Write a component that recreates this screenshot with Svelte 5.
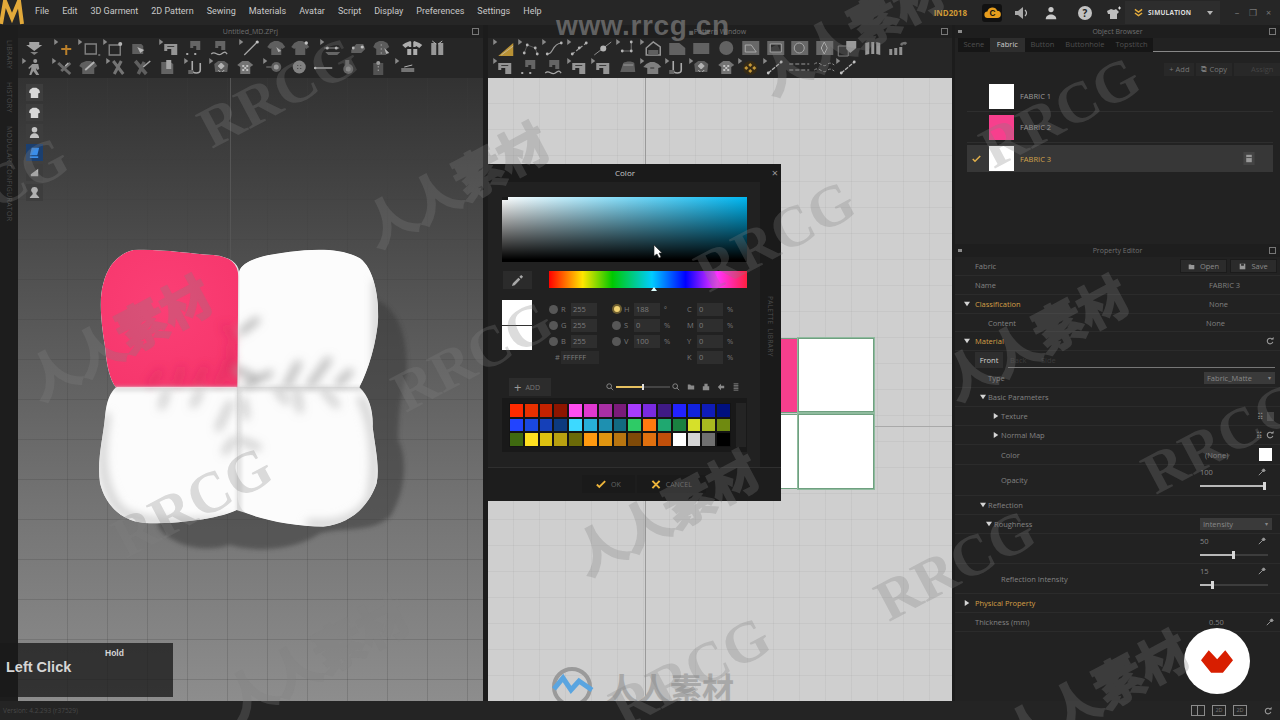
<script lang="ts">
  const menu = ['File', 'Edit', '3D Garment', '2D Pattern', 'Sewing', 'Materials', 'Avatar', 'Script', 'Display', 'Preferences', 'Settings', 'Help'];

  // toolbar icons, drawn on a 24x18 box; a name ending in ^ gets the little corner marker
  const icons: Record<string, string> = {
    down: '<path d="M7 3h10v3h3l-8 6-8-6h3z" fill="#c8c8c8"/><path d="M8 13h8l-4 3z" fill="#9a9a9a"/>',
    move: '<path d="M11 6h2v3h4v2h-4v5h-2v-5H7V9h4z" fill="#e59a2c"/>',
    rect: '<path d="M7 5h11v10H7z" fill="none" stroke="#9a9a9a" stroke-width="1.4"/><path d="M20 15h2v2h-2z" fill="#777"/>',
    rectp: '<path d="M6 6h11v10H6z" fill="none" stroke="#9a9a9a" stroke-width="1.4"/><circle cx="17" cy="5" r="2" fill="#ddd"/>',
    fold: '<path d="M5 5h9l2 2v8H5z" fill="#6e6e6e"/><path d="M10 8l7 3-4 3z" fill="#ddd"/>',
    mach: '<path d="M5 5h13v11h-6v-6H8v2H5z" fill="#b5b5b5"/><path d="M8 7h7v1H8z" fill="#444"/>',
    seam: '<path d="M7 2h10v9H13V7h-3v2H7z" fill="#777"/><path d="M3 15h16" stroke="#ccc" stroke-dasharray="2 6" stroke-width="2"/>',
    wave: '<path d="M7 2h10v9H13V7h-3v2H7z" fill="#777"/><path d="M3 15c4-4 6 3 10 0s4-2 6 0" fill="none" stroke="#ccc" stroke-width="1.3"/>',
    needle: '<path d="M5 16L17 4" stroke="#c9c9c9" stroke-width="1.3"/><circle cx="18" cy="3" r="1.6" fill="#eee"/>',
    shirtd: '<path d="M6 4l4-2h4l4 2 3 4-3 2-1-1v7H7V9l-1 1-3-2z" fill="#6f6f6f"/><path d="M12 8l5 4-3 1z" fill="#ddd"/>',
    shirtp: '<path d="M6 4l4-2h4l4 2 3 4-3 2-1-1v7H7V9l-1 1-3-2z" fill="#6f6f6f"/><circle cx="18" cy="4" r="1.7" fill="#eee"/>',
    pin: '<path d="M4 9h15" stroke="#aaa"/><circle cx="7" cy="9" r="1.5" fill="#ddd"/><circle cx="16" cy="9" r="1.5" fill="#ddd"/><path d="M5 13h15l-3 3H8z" fill="#777"/>',
    pin2: '<path d="M7 11l5-6h7l2 5-4 4H7z" fill="#707070"/><circle cx="18" cy="8" r="1.6" fill="#eee"/><circle cx="9" cy="9" r="1.4" fill="#ddd"/>',
    shirt3: '<path d="M6 4l4-2h4l4 2 2 4-3 2v6H7v-6L4 8z" fill="#6c6c6c"/><path d="M12 5v10" stroke="#aaa" stroke-dasharray="2 2"/><path d="M15 9l5 5-3 1z" fill="#ddd"/>',
    split: '<path d="M5 4l5-2 1 1v5H9L8 7 5 9 2 6zM19 4l-5-2-1 1v5h2l1-1 3 2 3-3z" fill="#d4d4d4"/><path d="M7 10h4v6H7zM13 10h4v6h-4z" fill="#d4d4d4"/>',
    gift: '<path d="M6 4h5v12H6zM13 4h5v12h-5z" fill="#b8b8b8"/><path d="M11 5l-4-3M13 5l4-3" stroke="#ddd"/>',
    walk: '<circle cx="13" cy="3" r="2" fill="#bbb"/><path d="M10 6h6l1 5-2 1-1-2v2l3 5h-3l-3-4-2 4H7l2-6V9L7 11 6 10z" fill="#b5b5b5"/>',
    cut: '<path d="M6 5l12 11M18 5L9 13" stroke="#7d7d7d" stroke-width="3"/><path d="M13 8l3-3" stroke="#ddd" stroke-width="1.2"/>',
    shirtx: '<path d="M5 5l5-2h4l5 2 2 3-3 2v6H6v-6L3 8z" fill="#707070"/><path d="M9 12l9-8" stroke="#ddd" stroke-width="1.8"/>',
    xcut: '<path d="M7 3l10 13M15 3L8 16" stroke="#8b8b8b" stroke-width="3"/>',
    xknife: '<path d="M5 3l11 13M14 4L8 16" stroke="#6f6f6f" stroke-width="3.5"/><path d="M13 9l7-6" stroke="#ccc" stroke-width="1.5"/>',
    book: '<path d="M6 4h9l3 2v10H6z" fill="#757575"/><path d="M11 2h5v9h-5z" fill="#c9c9c9"/>',
    tape: '<path d="M8 3v9c0 4 8 4 8 0V5" fill="none" stroke="#cfcfcf" stroke-width="1.6"/><path d="M4 12h5v4H4z" fill="#777"/>',
    check: '<path d="M5 6l4-3h6l4 3-1 8H6z" fill="#707070"/><path d="M9 8l3 3 3-3-3-3zM9 12l2 2M15 12l-2 2" fill="#ddd" stroke="#ddd"/>',
    check2: '<path d="M4 7l5-4h6l5 4-3 2v7H7V9z" fill="#8a8a8a"/><path d="M9 7h2v2H9zM13 7h2v2h-2zM11 9h2v2h-2zM9 11h2v2H9zM13 11h2v2h-2z" fill="#eee"/>',
    btn: '<path d="M3 9h6" stroke="#999"/><circle cx="13" cy="9" r="5" fill="#6f6f6f"/><circle cx="13" cy="9" r="2.5" fill="#bbb"/>',
    btn2: '<circle cx="12" cy="9" r="6.5" fill="#9c9c9c"/><path d="M10 7h1v1h-1zM13 7h1v1h-1zM10 10h1v1h-1zM13 10h1v1h-1z" fill="#444"/>',
    line: '<path d="M2 10h18" stroke="#bbb" stroke-width="1.6"/><circle cx="3" cy="10" r="1.2" fill="#eee"/>',
    hole: '<path d="M9 2h4v5H9z" fill="#777"/><circle cx="12" cy="11" r="5" fill="#777"/><circle cx="12" cy="11" r="2.5" fill="#aaa"/>',
    jacket: '<path d="M7 5h10v12H7z" fill="#5f5f5f"/><circle cx="12" cy="5" r="2" fill="#bbb"/><path d="M12 8v7" stroke="#ccc" stroke-dasharray="1.5 2"/>',
    iron2: '<path d="M6 10h13v4H6z" fill="#8a8a8a"/><path d="M9 9l8-2" stroke="#ddd"/>',
    tri: '<path d="M20 4v13H5z" fill="#e3b13a"/><path d="M8 16l12-9" stroke="#fff" stroke-width=".6"/>',
    poly: '<path d="M6 14l3-8 8 3 2 6" fill="none" stroke="#666"/><g fill="#ddd"><circle cx="6" cy="14" r="1.4"/><circle cx="9" cy="6" r="1.4"/><circle cx="17" cy="9" r="1.4"/><circle cx="19" cy="15" r="1.4"/></g>',
    curve: '<path d="M5 15c7 0 4-10 14-11" fill="none" stroke="#bbb" stroke-width="1.2"/><circle cx="5" cy="15" r="1.4" fill="#ddd"/><circle cx="19" cy="4" r="1.4" fill="#ddd"/>',
    curve2: '<path d="M5 15l14-11" stroke="#bbb" stroke-dasharray="3 2" stroke-width="1.2"/><circle cx="5" cy="15" r="1.4" fill="#ddd"/><circle cx="12" cy="9" r="1.4" fill="#ddd"/><circle cx="19" cy="4" r="1.4" fill="#ddd"/>',
    circ: '<path d="M3 16L20 3" stroke="#aaa"/><circle cx="12" cy="9.500" r="3" fill="#ddd"/>',
    corner: '<path d="M15 3v9H6" fill="none" stroke="#888"/><g fill="#ddd"><circle cx="15" cy="3" r="1.4"/><circle cx="15" cy="12" r="1.4"/><circle cx="6" cy="12" r="1.4"/></g>',
    house: '<path d="M6 9l7-6 7 5v8H6z" fill="none" stroke="#b5b5b5" stroke-width="1.5"/><path d="M8 11h10v5H8z" fill="#6f6f6f"/>',
    folder: '<path d="M4 4h10l6 5v7H4z" fill="#747474"/>',
    frect: '<path d="M4 4h16v11H4z" fill="#747474"/>',
    fcirc: '<circle cx="12" cy="9" r="7" fill="#747474"/>',
    note: '<path d="M4 2h17v14H4z" fill="#7b7b7b"/><path d="M7 6h6l5 7H7z" fill="none" stroke="#cfcfcf"/>',
    orect: '<path d="M4 2h17v14H4z" fill="#7b7b7b"/><path d="M7 5h11v8H7z" fill="#2e2e2e" stroke="#ccc"/>',
    ocirc: '<path d="M4 2h17v14H4z" fill="#7b7b7b"/><circle cx="12" cy="9" r="5" fill="#6c6c6c" stroke="#ccc"/>',
    odia: '<path d="M4 2h17v14H4z" fill="#7b7b7b"/><path d="M12 3l3 6-3 6-3-6z" fill="#6c6c6c" stroke="#ddd"/>',
    shape: '<path d="M2 7h10v10H2z" fill="none" stroke="#999"/><path d="M10 2h10v7l-6 5-4-4z" fill="#bbb"/>',
    bars: '<path d="M4 4l4-1v12l-4 1zM10 3h3v12h-3zM15 3l4 1v12l-4-1z" fill="#b8b8b8"/>',
    bararr: '<path d="M4 10h3v6H4zM9 9h3v7H9zM14 8h3v8h-3z" fill="#b0b0b0"/><path d="M15 6c0-3 3-3 5-3l-1-1 3 2-3 3 1-1c-2-1-3 0-3 1z" fill="#888"/>',
    iron: '<path d="M4 14l3-9c3-2 9-2 11 0l1 9z" fill="#6f6f6f"/><path d="M7 7h10" stroke="#bbb"/>',
    shirts: '<path d="M6 6l4-2h4l4 2 3 3-3 1v6H7v-6L3 9z" fill="#999"/><path d="M10 10h4" stroke="#333"/>',
    sorange: '<circle cx="12" cy="10" r="7" fill="#3a2c12"/><path d="M12 5l2 2-2 2-2-2zM12 11l2 2-2 2-2-2zM8 8l2 2-2 2-2-2zM16 8l2 2-2 2-2-2z" fill="#f0b73d"/>',
    ln: '<path d="M5 15L18 4" stroke="#ddd" stroke-width="1.3" stroke-dasharray="4 1"/><circle cx="5" cy="15" r="1.4" fill="#eee"/><circle cx="18" cy="4" r="1.4" fill="#eee"/>',
    dash: '<path d="M2 6h20M2 12h20" stroke="#bbb" stroke-dasharray="4 2" stroke-width="1.2"/>',
    wv: '<path d="M2 6c5-4 8 4 12 1s5-2 8 0M2 12c5-4 8 4 12 1s5-2 8 0" fill="none" stroke="#aaa" stroke-dasharray="3 2"/>'
  };

  const bar3d = [
    [['down'], ['move^', 'rect^', 'rectp^', 'fold'], ['mach^', 'seam', 'wave'], ['needle^', 'shirtd', 'shirtp'], ['pin^', 'pin2', 'shirt3'], ['split', 'gift']],
    [['walk^'], ['cut^', 'shirtx'], ['xcut^', 'xknife', 'book'], ['tape^', 'check^', 'check2'], ['btn^', 'btn2', 'line', 'hole'], ['jacket'], ['iron2^']]
  ];
  const barPattern = [
    ['tri^', 'poly^', 'curve^', 'curve2^', 'circ', 'corner^', 'house^', 'folder', 'frect', 'fcirc', 'note', 'orect', 'ocirc', 'odia', 'shape', 'bars', 'bararr'],
    ['mach^', 'seam', 'wave', 'mach^', 'mach^', 'iron', 'shirts^', 'tape^', 'check^', 'check2', 'sorange^', 'ln^', 'dash', 'wv', 'ln^']
  ];
  const shirtPath = 'M2 4l3-2h4l3 2 1 3-2 1v5H3V8L1 7z';
  const sideTools = [
    { d: shirtPath, c: '#d8d8d8' },
    { d: shirtPath, c: '#d8d8d8' },
    { d: 'M7 1a3 3 0 0 1 0 6a3 3 0 0 1 0-6M2 13c0-7 10-7 10 0z', c: '#c4c4c4' },
    { d: 'M4 2h8l-2 8H2zM2 11h9v2H2z', c: '#3b8eea', active: true },
    { d: 'M3 9l8-6v8H3z', c: '#b5b5b5' },
    { d: 'M7 1a3.500 3.500 0 0 1 2 6.500v1.500l3 3v1H2v-1l3-3V7.500A3.500 3.500 0 0 1 7 1z', c: '#b0b0b0' }
  ];

  const palette = [
    ['#ff2a00', '#e83000', '#c42200', '#8c1500', '#ff4df0', '#e038d0', '#a92fa5', '#7a1b7a', '#a83cff', '#7a2ae0', '#3f1a85', '#2222ff', '#1122dd', '#0f1cb8', '#00107f'],
    ['#2244ff', '#1a48e0', '#1540b8', '#0c3a7f', '#3dd9ff', '#28b0d8', '#1e90b0', '#126a80', '#2ecb66', '#ff7a10', '#1fa870', '#1a8040', '#d6e02a', '#a8b820', '#6f8a10'],
    ['#3f6a10', '#ffe020', '#dcc010', '#b8a010', '#6b6a08', '#ff9a10', '#e09510', '#b87510', '#7f4a08', '#e0700f', '#c04f0a', '#ffffff', '#d5d5d5', '#707070', '#000000']
  ];

  const tabs = ['Scene', 'Fabric', 'Button', 'Buttonhole', 'Topstitch'];
  const fabrics = [
    { name: 'FABRIC 1', color: '#ffffff', on: false },
    { name: 'FABRIC 2', color: '#f73f8d', on: false },
    { name: 'FABRIC 3', color: '#ffffff', on: true }
  ];

  // diagonal watermarks: x, y of the centre
  const marks = [
    { t: 'RRCG', x: 278, y: 92 }, { t: 'RRCG', x: -12, y: 192 }, { t: 'RRCG', x: 775, y: 236 },
    { t: 'RRCG', x: 472, y: 356 }, { t: 'RRCG', x: 1060, y: 112 }, { t: 'RRCG', x: 1222, y: 438 },
    { t: 'RRCG', x: 192, y: 502 }, { t: 'RRCG', x: 955, y: 565 }, { t: 'RRCG', x: 690, y: 672 },
    { t: '人人素材', x: 118, y: 335 }, { t: '人人素材', x: 455, y: 182 }, { t: '人人素材', x: 850, y: 30 },
    { t: '人人素材', x: 1035, y: 335 }, { t: '人人素材', x: 665, y: 510 }, { t: '人人素材', x: 315, y: 655 },
    { t: '人人素材', x: 1095, y: 690 }
  ];
</script>

{#snippet tool(name)}
  <svg class="tool" viewBox="0 0 24 18" aria-hidden="true">
    {#if name.endsWith('^')}<path d="M0 0v6l4-3z" fill="#a5a5a5" />{/if}
    {@html icons[name.replace('^', '')]}
  </svg>
{/snippet}

{#snippet wrench()}
  <svg class="wrench" viewBox="0 0 10 10"><path d="M1 9l5-5M5 3l2-2 2 2-2 2z" stroke="#9b9b9b" stroke-width="1.2" fill="#9b9b9b" /></svg>
{/snippet}

{#snippet refresh()}
  <svg class="wrench" viewBox="0 0 10 10"><path d="M8 3a3.500 3.500 0 1 0 .5 3" fill="none" stroke="#9b9b9b" stroke-width="1.4" /><path d="M6 3h3.500V0z" fill="#9b9b9b" /></svg>
{/snippet}

{#snippet tri(down)}
  <svg class="tri" viewBox="0 0 8 8"><path d={down ? 'M0 1h8L4 7z' : 'M1 0v8l6-4z'} fill="#d5d5d5" /></svg>
{/snippet}

{#snippet slider(pct, width)}
  <div class="slider" style="width:{width}px">
    <div class="fill" style="width:{pct}%"></div>
    <div class="thumb" style="left:{pct}%"></div>
  </div>
{/snippet}

<div class="app">
  <header class="menubar">
    <svg class="logo" viewBox="0 0 24 25"><path d="M1 24L5 1l7 17 7-17 3 23" fill="none" stroke="#e2a93a" stroke-width="4" /></svg>
    <nav class="menu">
      {#each menu as m}<span>{m}</span>{/each}
    </nav>
    <div class="top-right">
      <span class="license">IND2018</span>
      <span class="cloud">
        <svg viewBox="0 0 18 14"><path d="M4 13a3.500 3.500 0 0 1-.5-7 5.500 5.500 0 0 1 10.500-1 4 4 0 0 1 0 8z" fill="#e69d1d" /><text x="9" y="11" text-anchor="middle" class="cloud-c">C</text></svg>
      </span>
      <svg class="ic speaker" viewBox="0 0 16 14"><path d="M1 5h3l5-4v12l-5-4H1z" fill="#a8a8a8" /><path d="M11 4c2 2 2 4 0 6" fill="none" stroke="#bbb" stroke-width="1.200" /></svg>
      <svg class="ic person" viewBox="0 0 14 16"><circle cx="7" cy="4" r="3" fill="#c8c8c8" /><path d="M1 15c0-7 12-7 12 0z" fill="#c8c8c8" /></svg>
      <span class="help">?</span>
      <svg class="ic shirtplus" viewBox="0 0 16 14"><path d="M1 5l4-2 3 1 2-1 3 3-2 2v5H4V8L2 8z" fill="#bdbdbd" /><path d="M12 2h3M13.500 .5v3" stroke="#ddd" /></svg>
      <div class="simulation">
        <svg viewBox="0 0 10 10" class="chev"><path d="M1 1l4 3 4-3M1 5l4 3 4-3" fill="none" stroke="#e6ad3d" stroke-width="1.600" /></svg>
        <span>SIMULATION</span>
        <svg viewBox="0 0 8 8" class="dd"><path d="M1 2h6L4 6z" fill="#b5b5b5" /></svg>
      </div>
      <div class="winctl"><span>–</span><span>❐</span><span>×</span></div>
    </div>
  </header>

  <main class="main">
    <aside class="rail">
      <span>LIBRARY</span>
      <span>HISTORY</span>
      <span>MODULAR CONFIGURATOR</span>
    </aside>

    <section class="win win3d">
      <div class="wintitle">Untitled_MD.ZPrj<i class="pop"></i></div>
      <div class="toolbar">
        {#each bar3d as row, r}
          <div class="toolrow" class:second={r === 1}>
            {#each row as group}
              <div class="group">{#each group as name}{@render tool(name)}{/each}</div>
            {/each}
          </div>
        {/each}
      </div>
      <div class="viewport">
        <div class="sidetools">
          {#each sideTools as s}
            <span class="sidetool" class:active={s.active}>
              <svg viewBox="0 0 14 14"><path d={s.d} fill={s.c} /></svg>
            </span>
          {/each}
        </div>
        <i class="axis"></i>
        <svg class="pillows" viewBox="0 0 990 960" aria-hidden="true">
          <defs>
            <filter id="soft" x="-20%" y="-20%" width="140%" height="140%"><feGaussianBlur stdDeviation="6" /></filter>
            <filter id="softer" x="-20%" y="-20%" width="140%" height="140%"><feGaussianBlur stdDeviation="14" /></filter>
            <radialGradient id="pinkg" cx="45%" cy="40%" r="70%"><stop offset="0" stop-color="#fb3f75" /><stop offset="1" stop-color="#f6366c" /></radialGradient>
            <clipPath id="all"><path d="M130 30C200 25 300 40 370 45C420 50 445 70 447 95C460 60 520 45 600 35C680 25 760 25 810 55C850 85 865 160 865 230C860 310 835 390 808 442C840 470 850 520 848 560C855 620 870 680 860 730C840 790 790 850 700 860C620 860 520 840 470 820L440 810C400 830 300 850 180 850C110 850 50 810 30 730C20 660 40 590 45 530C50 480 60 460 78 442C60 420 50 380 45 320C35 260 25 180 40 130C55 70 90 40 130 30Z" /></clipPath>
          </defs>
          <path d="M860 180C930 210 955 300 950 400C930 470 925 540 925 600C955 660 945 760 900 830C840 880 760 860 690 880C620 930 500 940 420 915C340 940 260 920 210 870L180 800L700 400Z" fill="#383838" opacity=".52" filter="url(#soft)" />
          <g clip-path="url(#all)">
            <rect width="990" height="960" fill="#e4e4e4" />
            <path d="M130 30C200 25 300 40 370 45C420 50 445 70 445 110L442 442L78 442C60 420 50 380 45 320C35 260 25 180 40 130C55 70 90 40 130 30Z" fill="url(#pinkg)" />
            <path d="M448 90C460 60 520 45 600 35C680 25 760 25 810 55C850 85 865 160 865 230C860 310 835 390 808 442L448 442Z" fill="#fcfcfc" />
            <path d="M78 444C200 445 330 445 441 445L441 810C400 830 300 850 180 850C110 850 50 810 30 730C20 660 40 590 45 530C50 480 60 460 78 444Z" fill="#fcfcfc" />
            <path d="M445 445L808 445C840 470 850 520 848 560C855 620 870 680 860 730C840 790 790 850 700 860C620 860 520 840 470 820C445 805 443 780 443 760Z" fill="#fcfcfc" />
            <path d="M860 120V420M810 470C860 560 860 700 840 780C800 840 740 860 650 850M430 840C300 850 160 860 90 810C30 740 30 640 50 520" fill="none" stroke="#c8c8c8" stroke-width="20" filter="url(#softer)" />
            <g filter="url(#softer)" fill="none" stroke-linecap="round">
              <g stroke="#c92557" stroke-width="14" opacity=".5">
                <path d="M180 435L210 395M260 435L275 385M320 430L345 385M385 430L415 365M435 420L420 320M435 300L405 260" />
              </g>
              <g stroke="#a2a2a2" stroke-width="16">
                <path d="M470 435L540 400M590 435L625 370M660 435L715 360M745 430L780 395M455 275L500 240M445 390L490 410" />
                <path d="M230 455L215 500M330 455L310 495M420 490L385 565M430 600L405 635" opacity=".7" />
                <path d="M560 450L590 485M620 450L630 510M700 450L740 495M460 480L468 530M450 600L505 622" opacity=".7" />
              </g>
            </g>
            <path d="M447 440V820M450 446H820M70 446H440" stroke="#c8c8c8" stroke-width="8" filter="url(#soft)" />
            <path d="M446 95V440" stroke="#f2e3e7" stroke-width="2" />
            <path d="M80 442H440" stroke="#ffe3ec" stroke-width="2.500" />
          </g>
        </svg>
      </div>
    </section>

    <section class="win winpat">
      <div class="wintitle">Pattern Window<i class="pop"></i></div>
      <div class="toolbar pat">
        {#each barPattern as row}
          <div class="toolrow">{#each row as name}{@render tool(name)}{/each}</div>
        {/each}
      </div>
      <div class="canvas">
        <i class="vline"></i>
        <i class="hline"></i>
        <div class="piece p1"></div>
        <div class="piece p2"></div>
        <div class="piece p3"></div>
        <div class="piece p4"></div>

        <div class="brand">
          <svg viewBox="0 0 44 44"><circle cx="22" cy="22" r="18" fill="none" stroke="#9a9a9a" stroke-width="4" /><path d="M4 24l9-11 8 12 8-9 13 9" fill="none" stroke="#5aa5e0" stroke-width="5" /></svg>
          <span>人人素材</span>
        </div>

        <div class="dialog">
          <div class="dlg-title">Color<span class="dlg-x">×</span></div>
          <div class="dlg-body">
            <div class="dlg-main">
              <div class="sv">
                <i class="sv-mark"></i>
                <svg class="cursor" viewBox="0 0 10 14"><path d="M1 0v11l3-2 2 4 2-1-2-4h3z" fill="#fff" stroke="#222" stroke-width=".6" /></svg>
              </div>
              <div class="hue-row">
                <span class="dropper">
                  <svg viewBox="0 0 14 14"><path d="M1 13l1-3 6-6 2 2-6 6zM9 3l2-2 2 2-2 2z" fill="#a8a8a8" /></svg>
                </span>
                <div class="hue"><i class="hue-mark"></i></div>
              </div>
              <div class="values">
                <div class="compare"><i></i><i></i></div>
                <div class="fields">
                  <div class="field"><i class="radio"></i><b>R</b><span class="box">255</span></div>
                  <div class="field"><i class="radio on"></i><b>H</b><span class="box">188</span><em>º</em></div>
                  <div class="field cm"><b>C</b><span class="box">0</span><em>%</em></div>
                  <div class="field"><i class="radio"></i><b>G</b><span class="box">255</span></div>
                  <div class="field"><i class="radio"></i><b>S</b><span class="box">0</span><em>%</em></div>
                  <div class="field cm"><b>M</b><span class="box">0</span><em>%</em></div>
                  <div class="field"><i class="radio"></i><b>B</b><span class="box">255</span></div>
                  <div class="field"><i class="radio"></i><b>V</b><span class="box">100</span><em>%</em></div>
                  <div class="field cm"><b>Y</b><span class="box">0</span><em>%</em></div>
                  <div class="field hex"><b>#</b><span class="box wide">FFFFFF</span></div>
                  <div class="field"></div>
                  <div class="field cm"><b>K</b><span class="box">0</span><em>%</em></div>
                </div>
              </div>
              <div class="pal-head">
                <span class="add"><b>+</b>ADD</span>
                <div class="pal-tools">
                  <svg class="zoomi" viewBox="0 0 10 10"><circle cx="4" cy="4" r="3" fill="none" stroke="#999" /><path d="M6 6l3 3" stroke="#999" /></svg>
                  <div class="zslider"><i></i><u></u></div>
                  <svg class="zoomi" viewBox="0 0 10 10"><circle cx="4" cy="4" r="3" fill="none" stroke="#999" /><path d="M6 6l3 3" stroke="#999" /></svg>
                  <svg class="zoomi gap" viewBox="0 0 10 10"><path d="M1 2h3l1 1h4v5H1z" fill="#8a8a8a" /></svg>
                  <svg class="zoomi gap" viewBox="0 0 10 10"><path d="M1 4h8v5H1zM3 1h4v3H3z" fill="#8a8a8a" /></svg>
                  <svg class="zoomi gap" viewBox="0 0 10 10"><path d="M1 5l4-4v2.500h4v3H5V9z" fill="#8a8a8a" /></svg>
                  <svg class="zoomi gap" viewBox="0 0 10 10"><path d="M2 1h6M2 3h6M2 5h6M2 7h6M2 9h6" stroke="#8a8a8a" /></svg>
                </div>
              </div>
              <div class="palette">
                <div class="swatches">
                  {#each palette as row}
                    {#each row as c}<i style="background:{c}"></i>{/each}
                  {/each}
                </div>
                <div class="pal-scroll"></div>
              </div>
            </div>
            <div class="strip"><span>PALETTE  LIBRARY</span></div>
          </div>
          <div class="dlg-foot">
            <span class="dbtn"><svg viewBox="0 0 12 10"><path d="M1 5l3 3 7-7" fill="none" stroke="#edb43a" stroke-width="2.200" /></svg>OK</span>
            <span class="dbtn"><svg viewBox="0 0 10 10"><path d="M1 1l8 8M9 1L1 9" stroke="#edb43a" stroke-width="2.200" /></svg>CANCEL</span>
          </div>
        </div>
      </div>
    </section>

    <aside class="side">
      <div class="objbrowser">
        <div class="wintitle small"><i class="dot"></i>Object Browser<i class="pop"></i></div>
        <div class="tabs">
          {#each tabs as t}<span class:active={t === 'Fabric'}>{t}</span>{/each}
        </div>
        <div class="actions">
          <span>+ Add</span><span>⧉ Copy</span><span class="dim">Assign</span>
        </div>
        <div class="fabrics">
          {#each fabrics as f}
            <div class="fabric" class:on={f.on}>
              <span class="tick">{#if f.on}<svg viewBox="0 0 12 10"><path d="M1 5l3 3 7-7" fill="none" stroke="#e2b04a" stroke-width="2" /></svg>{/if}</span>
              <i class="fswatch" style="background:{f.color}"></i>
              <span class="fname">{f.name}</span>
              {#if f.on}<svg class="trash" viewBox="0 0 12 14"><rect width="12" height="14" fill="#444" /><path d="M3 3h6v8H3z" fill="#999" /><path d="M3 6h6" stroke="#444" /></svg>{/if}
            </div>
          {/each}
        </div>
      </div>

      <div class="propeditor">
        <div class="wintitle small"><i class="dot"></i>Property Editor<i class="pop"></i></div>
        <div class="row">
          <span class="lab l0 auto">Fabric</span>
          <div class="pbtns">
            <span class="pbtn"><svg viewBox="0 0 10 10"><path d="M1 2h3l1 1h4v6H1z" fill="#999" /></svg>Open</span>
            <span class="pbtn"><svg viewBox="0 0 10 10"><path d="M1 1h8v8H1z" fill="#999" /><path d="M3 1h4v3H3z" fill="#333" /></svg>Save</span>
          </div>
        </div>
        <div class="row"><span class="lab l0">Name</span><span class="val">FABRIC 3</span></div>
        <div class="row"><span class="lab l0 gold">{@render tri(true)}Classification</span><span class="val">None</span></div>
        <div class="row t18"><span class="lab l1">Content</span><span class="val v2">None</span></div>
        <div class="row"><span class="lab l0 gold">{@render tri(true)}Material</span><span class="end">{@render refresh()}</span></div>
        <div class="row front">
          <span class="fronttab">Front</span><span class="ghost">Back</span><span class="ghost">Side</span>
        </div>
        <div class="row"><span class="lab l1">Type</span><span class="select"><span>Fabric_Matte</span><b>▾</b></span></div>
        <div class="row"><span class="lab l1">{@render tri(true)}Basic Parameters</span></div>
        <div class="row"><span class="lab l2">{@render tri(false)}Texture</span><span class="end">⠿ <u class="mini"></u></span></div>
        <div class="row"><span class="lab l2">{@render tri(false)}Normal Map</span><span class="end">⠿ {@render refresh()}</span></div>
        <div class="row t20"><span class="lab l2">Color</span><span class="val v3">(None)</span><i class="colorbox"></i></div>
        <div class="row tall">
          <span class="lab l2">Opacity</span>
          <div class="num"><div class="numtop"><span>100</span>{@render wrench()}</div>{@render slider(98, 65)}</div>
        </div>
        <div class="row"><span class="lab l1">{@render tri(true)}Reflection</span></div>
        <div class="row"><span class="lab l15">{@render tri(true)}Roughness</span><span class="select wide"><span>Intensity</span><b>▾</b></span></div>
        <div class="row tall2">
          <span class="lab l2"></span>
          <div class="num"><div class="numtop"><span>50</span>{@render wrench()}</div>{@render slider(49, 68)}</div>
        </div>
        <div class="row tall2">
          <span class="lab l2">Reflection Intensity</span>
          <div class="num"><div class="numtop"><span>15</span>{@render wrench()}</div>{@render slider(18, 68)}</div>
        </div>
        <div class="row"><span class="lab l0 gold">{@render tri(false)}Physical Property</span></div>
        <div class="row"><span class="lab l0">Thickness (mm)</span><span class="val">0.50</span><span class="end">{@render wrench()}</span></div>
      </div>
    </aside>
  </main>

  <footer class="status">
    <span class="version">Version: 4.2.293 (r37529)</span>
    <div class="views">
      <i class="view split"></i><i class="view">2D</i><i class="view">2D</i>
      <span class="sep"></span>{@render refresh()}
    </div>
  </footer>

  <!-- floating layers over the whole app -->
  <div class="hold">
    <span class="hold-top">Hold</span>
    <span class="hold-main">Left Click</span>
  </div>
  <div class="badge">
    <svg viewBox="0 0 95 67"><path d="M23 0L48 27 72 0 95 30 65 67H30L0 30z" fill="#d81e00" /></svg>
  </div>
  <div class="url">www.rrcg.cn</div>
  <div class="marks">
    {#each marks as m}
      <span class={m.t === 'RRCG' ? 'mark latin' : 'mark cjk'} style="left:{m.x}px;top:{m.y}px">{m.t}</span>
    {/each}
  </div>
</div>

<style>
  :global(body) {
    margin: 0;
    background: #1c1c1c;
  }
  .app {
    position: relative;
    width: 1280px;
    height: 720px;
    overflow: hidden;
    display: flex;
    flex-direction: column;
    background: #1c1c1c;
    color: #9a9a9a;
    font-family: "Open Sans", "Liberation Sans", sans-serif;
    font-size: 8px;
    filter: blur(.35px);
  }
  i { display: block; font-style: normal; }

  /* top menu */
  .menubar {
    height: 25px;
    display: flex;
    align-items: center;
    background: #262626;
    flex-shrink: 0;
  }
  .logo { width: 24px; height: 25px; flex-shrink: 0; }
  .menu {
    display: flex;
    gap: 13px;
    margin-left: 11px;
    margin-bottom: 4px;
    font-family: Roboto, sans-serif;
    font-size: 9px;
    color: #c8c8c8;
    white-space: nowrap;
  }
  .top-right {
    margin-left: auto;
    display: flex;
    align-items: center;
    height: 25px;
  }
  .license { color: #d29a35; font-weight: 700; font-size: 8px; margin-right: 15px; }
  .cloud {
    width: 20px;
    height: 18px;
    background: #111;
    border-radius: 3px;
    display: flex;
    align-items: center;
    justify-content: center;
    margin-right: 12px;
  }
  .cloud svg { width: 17px; height: 13px; }
  .cloud-c { font: 700 9px "Liberation Sans", sans-serif; fill: #111; }
  .ic { height: 14px; }
  .speaker { width: 16px; margin-right: 14px; }
  .person { width: 14px; margin-right: 20px; }
  .help {
    width: 14px;
    height: 14px;
    border-radius: 50%;
    background: #c2c2c2;
    color: #222;
    font-size: 10px;
    font-weight: 700;
    line-height: 14px;
    text-align: center;
    margin-right: 14px;
  }
  .shirtplus { width: 16px; margin-right: 3px; }
  .simulation {
    width: 95px;
    height: 23px;
    background: #2d2d2d;
    display: flex;
    align-items: center;
    padding-left: 9px;
    box-sizing: border-box;
    color: #dcdcdc;
    font-weight: 700;
    font-size: 6.500px;
    letter-spacing: .2px;
  }
  .chev { width: 9px; height: 10px; margin-right: 5px; }
  .dd { width: 8px; height: 8px; margin-left: 15px; }
  .winctl {
    width: 60px;
    display: flex;
    justify-content: space-around;
    padding: 0 4px 0 10px;
    box-sizing: border-box;
    color: #777;
    font-size: 9px;
  }

  /* main columns */
  .main {
    flex: 1;
    min-height: 0;
    display: flex;
  }
  .rail {
    width: 18px;
    background: #1d1d1d;
    writing-mode: vertical-rl;
    display: flex;
    gap: 13px;
    align-items: center;
    padding-top: 15px;
    box-sizing: border-box;
    font-size: 7px;
    color: #4c4c4c;
    letter-spacing: .3px;
    flex-shrink: 0;
  }
  .win { display: flex; flex-direction: column; min-width: 0; }
  .win3d { width: 465px; margin-right: 5px; }
  .winpat { width: 464px; margin-right: 3px; }
  .wintitle {
    height: 13px;
    background: #1f1f1f;
    text-align: center;
    font-size: 7px;
    line-height: 13px;
    color: #6f6f6f;
    position: relative;
    flex-shrink: 0;
  }
  .pop {
    position: absolute;
    right: 4px;
    top: 3px;
    width: 5px;
    height: 5px;
    border: 1px solid #777;
  }
  .toolbar {
    height: 40px;
    box-sizing: border-box;
    padding-bottom: 2px;
    background: #262626;
    display: flex;
    flex-direction: column;
    flex-shrink: 0;
  }
  .toolrow {
    height: 19px;
    display: flex;
    align-items: center;
    padding-left: 4px;
    gap: 7px;
  }
  .toolrow.second { gap: 5px; }
  .group { display: flex; }
  .tool { width: 24.500px; height: 18px; flex-shrink: 0; opacity: .78; }
  .pat .toolrow { gap: 0; padding-left: 5px; }

  /* 3D view */
  .viewport {
    flex: 1;
    position: relative;
    overflow: hidden;
    background:
      repeating-linear-gradient(90deg, transparent 0 39px, rgba(60, 60, 60, .22) 39px 40px) 10px 0,
      repeating-linear-gradient(0deg, transparent 0 39px, rgba(60, 60, 60, .22) 39px 40px) 0 18px,
      linear-gradient(180deg, #323232 0, #4f4f4f 30%, #757575 70%, #8d8d8d 100%);
  }
  .axis {
    position: absolute;
    left: 212px;
    top: 0;
    height: 190px;
    width: 1px;
    background: #555;
  }
  .sidetools {
    position: absolute;
    left: 8px;
    top: 6px;
    display: flex;
    flex-direction: column;
    gap: 3px;
  }
  .sidetool {
    width: 17px;
    height: 17px;
    background: #3d3d3d;
    display: flex;
    align-items: center;
    justify-content: center;
  }
  .sidetool svg { width: 13px; height: 13px; }
  .sidetool.active { background: #1b3f6f; }
  .pillows {
    position: absolute;
    left: 72px;
    top: 162px;
    width: 330px;
    height: 320px;
  }
  .hold {
    position: absolute;
    left: 0;
    top: 643px;
    width: 173px;
    height: 54px;
    background: rgba(26, 26, 26, .78);
    font-family: "Liberation Sans", sans-serif;
    color: #d6d6d6;
    font-weight: 700;
  }
  .hold-top { position: absolute; left: 105px; top: 5px; font-size: 8.500px; }
  .hold-main { position: absolute; left: 6px; top: 16px; font-size: 14.500px; }

  /* pattern view */
  .canvas {
    flex: 1;
    position: relative;
    overflow: hidden;
    background:
      repeating-linear-gradient(90deg, transparent 0 25px, rgba(120, 120, 120, .09) 25px 26px),
      repeating-linear-gradient(0deg, transparent 0 25px, rgba(120, 120, 120, .09) 25px 26px),
      #cfcfcf;
  }
  .vline { position: absolute; left: 157px; top: 0; bottom: 0; width: 1px; background: #9a9a9a; }
  .hline { position: absolute; left: 0; right: 0; top: 348px; height: 1px; background: #a9a9a9; }
  .piece {
    position: absolute;
    background: #fff;
    border: 1px solid #6fa080;
    box-sizing: border-box;
  }
  .p1 { left: 280px; top: 260px; width: 30px; height: 75px; background: #f73f8d; }
  .p2 { left: 310px; top: 260px; width: 76px; height: 74px; }
  .p3 { left: 280px; top: 336px; width: 30px; height: 75px; border-left: 0; }
  .p4 { left: 310px; top: 336px; width: 76px; height: 75px; }
  .p2, .p4 { box-shadow: 0 0 0 1px #8fbb9e; }

  .brand {
    position: absolute;
    left: 62px;
    top: 586px;
    display: flex;
    align-items: center;
    gap: 12px;
    color: #a8a8a8;
    font: 700 32px "Noto Sans CJK SC", sans-serif;
  }
  .brand svg { width: 44px; height: 44px; }

  .dialog {
    position: absolute;
    left: 0;
    top: 86px;
    width: 293px;
    height: 337px;
    background: #212121;
    display: flex;
    flex-direction: column;
    color: #8d8d8d;
  }
  .dlg-title {
    height: 18px;
    line-height: 18px;
    background: #1a1a1a;
    text-align: center;
    color: #c9c9c9;
    font-size: 8px;
    padding-right: 19px;
    position: relative;
  }
  .dlg-x { position: absolute; right: 3px; top: 0; font-size: 11px; color: #999; }
  .dlg-body { flex: 1; display: flex; min-height: 0; }
  .dlg-main { width: 272px; padding: 15px 0 0 14px; box-sizing: border-box; }
  .sv {
    position: relative;
    width: 245px;
    height: 65px;
    background:
      linear-gradient(to top, #000 4%, rgba(0, 0, 0, 0) 100%),
      linear-gradient(to right, #fff, #00b7f2);
  }
  .sv-mark { position: absolute; left: 0; top: 0; width: 6px; height: 3px; background: #1a1a1a; }
  .cursor { position: absolute; left: 151px; top: 48px; width: 10px; height: 14px; }
  .hue-row { display: flex; align-items: flex-start; margin-top: 9px; }
  .dropper {
    width: 29px;
    height: 18px;
    background: #2b2b2b;
    display: flex;
    align-items: center;
    justify-content: center;
    margin: 0 17px 0 1px;
  }
  .dropper svg { width: 13px; height: 13px; }
  .hue {
    position: relative;
    width: 198px;
    height: 17px;
    background: linear-gradient(90deg, #ff0000 0, #ffe600 17%, #00c800 32%, #00ccff 52%, #0000ff 69%, #ff33ff 85%, #ff2040 100%);
  }
  .hue-mark {
    position: absolute;
    left: 102px;
    bottom: -3px;
    width: 0;
    height: 0;
    border: 3px solid transparent;
    border-top: 0;
    border-bottom: 4px solid #dff;
  }
  .values { display: flex; margin-top: 11px; }
  .compare {
    width: 30px;
    height: 50px;
    display: flex;
    flex-direction: column;
    gap: 1px;
    background: #333;
    flex-shrink: 0;
  }
  .compare i { flex: 1; background: #fff; }
  .fields {
    display: grid;
    grid-template-columns: 63px 62px 60px;
    grid-auto-rows: 16px;
    margin-left: 17px;
    margin-top: 2px;
  }
  .field { display: flex; align-items: center; height: 14px; font-size: 7.500px; }
  .field b { font-weight: 400; width: 10px; margin-left: 3px; color: #777; }
  .radio { width: 9px; height: 9px; border-radius: 50%; background: #575757; }
  .radio.on { background: #f0d273; box-shadow: 0 0 0 2px #6f5f30; width: 6px; height: 6px; margin: 0 1.500px; }
  .box {
    width: 26px;
    height: 13px;
    background: #2e2e2e;
    line-height: 13px;
    padding-left: 2px;
    box-sizing: border-box;
    color: #7d7d7d;
  }
  .box.wide { width: 38px; margin-left: -4px; background: #2a2a2a; }
  .field em { font-style: normal; margin-left: 4px; color: #777; }
  .cm { margin-left: 13px; }
  .cm b { margin-left: 0; }
  .hex b { margin-left: 6px; }
  .pal-head {
    display: flex;
    align-items: center;
    margin: 12px 0 0 7px;
    height: 18px;
    width: 231px;
  }
  .add {
    width: 42px;
    height: 18px;
    background: #2c2c2c;
    display: flex;
    align-items: center;
    gap: 4px;
    padding-left: 5px;
    box-sizing: border-box;
    font-size: 7px;
    color: #777;
  }
  .add b { font-size: 13px; font-weight: 400; color: #999; }
  .pal-tools { margin-left: auto; display: flex; align-items: center; }
  .zoomi { width: 8px; height: 8px; }
  .zoomi.gap { margin-left: 7px; }
  .zslider { position: relative; width: 54px; height: 2px; background: #444; margin: 0 2px; }
  .zslider i { width: 27px; height: 2px; background: #e6c060; }
  .zslider u { position: absolute; left: 26px; top: -2px; width: 2px; height: 6px; background: #ddd; }
  .palette {
    display: flex;
    gap: 5px;
    background: #191919;
    padding: 5px 0 5px 7px;
    width: 245px;
    box-sizing: border-box;
    margin-top: 2px;
  }
  .swatches {
    display: grid;
    grid-template-columns: repeat(15, 14.800px);
    grid-auto-rows: 14.500px;
  }
  .swatches i { border: .5px solid #141414; box-sizing: border-box; }
  .pal-scroll { width: 10px; height: 44px; background: #242424; }
  .strip {
    flex: 1;
    background: #1a1a1a;
    writing-mode: vertical-rl;
    display: flex;
    align-items: center;
    padding-top: 114px;
    box-sizing: border-box;
    font-size: 6.500px;
    letter-spacing: .4px;
    color: #4e4e4e;
    white-space: pre;
  }
  .dlg-foot {
    height: 34px;
    border-top: 1px solid #2f2f2f;
    display: flex;
    gap: 2px;
    padding-top: 7px;
    padding-left: 94px;
    box-sizing: border-box;
    background: #1d1d1d;
  }
  .dbtn {
    height: 18px;
    padding: 0 14px;
    background: #1a1a1a;
    display: flex;
    align-items: center;
    gap: 5px;
    font-size: 7px;
    color: #666;
  }
  .dbtn svg { width: 10px; height: 9px; }

  /* right column */
  .side {
    width: 325px;
    background: #222;
    flex-shrink: 0;
    display: flex;
    flex-direction: column;
  }
  .objbrowser { height: 219px; flex-shrink: 0; }
  .small { height: 13px; background: #1e1e1e; }
  .dot {
    position: absolute;
    left: 3px;
    top: 5px;
    width: 4px;
    height: 3px;
    background: #8a8a8a;
  }
  .tabs {
    display: flex;
    height: 13px;
    border-bottom: 1px solid #888;
    margin-left: 3px;
    font-size: 7.500px;
    color: #4f4f4f;
  }
  .tabs span {
    padding: 0 5.500px;
    line-height: 13px;
    background: #161616;
    border-bottom: 1px solid #161616;
    margin-bottom: -1px;
  }
  .tabs .active { background: #2e2e2e; color: #cfcfcf; padding: 0 7px; border-bottom-color: #2e2e2e; }
  .actions {
    display: flex;
    justify-content: flex-end;
    gap: 2px;
    margin-top: 11px;
    font-size: 7.500px;
    color: #777;
  }
  .actions span {
    height: 13px;
    line-height: 13px;
    background: #282828;
    padding: 0 5px;
  }
  .actions .dim { padding-right: 0; width: 46px; padding-left: 17px; box-sizing: border-box; color: #444; }
  .fabrics { margin: 5px 7px 0 12px; }
  .fabric {
    height: 31px;
    display: flex;
    align-items: center;
    border-bottom: 1px solid #2e2e2e;
    box-sizing: border-box;
    font-size: 7.500px;
  }
  .fabric.on { background: #373737; height: 27px; border: 0; margin-top: 2px; color: #d2a24c; }
  .tick { width: 22px; padding-left: 5px; box-sizing: border-box; }
  .tick svg { width: 9px; height: 8px; display: block; }
  .fswatch { width: 25px; height: 25px; flex-shrink: 0; }
  .fname { margin-left: 6px; }
  .trash { width: 12px; height: 13px; margin-left: auto; margin-right: 18px; }

  .propeditor { flex: 1; min-height: 0; }
  .row {
    height: 19px;
    display: flex;
    align-items: center;
    position: relative;
    border-bottom: 1px solid #2b2b2b;
    box-sizing: border-box;
    font-size: 7.500px;
    color: #838383;
  }
  .t18 { height: 18px; }
  .t20 { height: 20px; }
  .tall { height: 31px; }
  .tall2 { height: 30px; }
  .lab { width: 250px; flex-shrink: 0; display: flex; align-items: center; white-space: nowrap; box-sizing: border-box; }
  .lab.auto { width: auto; }
  .l0 { padding-left: 20px; }
  .l1 { padding-left: 33px; }
  .l15 { padding-left: 39px; }
  .l2 { padding-left: 46px; }
  .gold { color: #d39f46; }
  .tri { width: 6px; height: 6px; margin-left: -8px; margin-right: 2px; flex-shrink: 0; }
  .l0 .tri { margin-left: -11px; margin-right: 5px; }
  .val { color: #808080; padding-left: 4px; }
  .v2 { padding-left: 1px; }
  .v3 { padding-left: 0; }
  .end {
    margin-left: auto;
    margin-right: 6px;
    display: flex;
    align-items: center;
    gap: 3px;
    color: #888;
    font-size: 9px;
  }
  .mini { width: 7px; height: 9px; background: #444; display: block; }
  .wrench { width: 8px; height: 8px; flex-shrink: 0; }
  .pbtns { margin-left: auto; display: flex; gap: 3px; margin-right: 3px; }
  .pbtn {
    width: 47px;
    height: 14px;
    background: #2b2b2b;
    border: 1px solid #1b1b1b;
    box-sizing: border-box;
    display: flex;
    align-items: center;
    justify-content: center;
    gap: 5px;
    color: #8a8a8a;
  }
  .pbtn svg { width: 7px; height: 7px; }
  .front { height: 18px; border-bottom: 0; padding-left: 20px; gap: 7px; align-items: flex-start; padding-top: 1px; }
  .front::after {
    content: "";
    position: absolute;
    left: 53px;
    right: 5px;
    bottom: 1px;
    height: 1px;
    background: #777;
  }
  .fronttab {
    width: 28px;
    height: 16px;
    line-height: 16px;
    background: #2e2e2e;
    color: #d2d2d2;
    text-align: center;
  }
  .ghost { color: #3b3b3b; width: 24px; line-height: 16px; }
  .select {
    position: absolute;
    left: 249px;
    top: 3px;
    width: 71px;
    height: 12px;
    background: #3a3a3a;
    display: flex;
    justify-content: space-between;
    align-items: center;
    padding: 0 4px 0 3px;
    box-sizing: border-box;
    color: #888;
  }
  .select.wide { left: 245px; width: 72px; }
  .select b { font-weight: 400; font-size: 6px; }
  .colorbox {
    position: absolute;
    right: 8px;
    top: 3px;
    width: 13px;
    height: 13px;
    background: #fff;
  }
  .num {
    position: absolute;
    left: 245px;
    top: 0;
    width: 68px;
  }
  .numtop {
    display: flex;
    justify-content: space-between;
    align-items: center;
    height: 14px;
    color: #868686;
    padding-right: 2px;
  }
  .slider { position: relative; height: 2px; background: #3d3d3d; margin-top: 6px; }
  .slider .fill { height: 2px; background: #b8b8b8; }
  .slider .thumb {
    position: absolute;
    top: -3px;
    width: 3px;
    height: 8px;
    margin-left: -1px;
    background: #d8d8d8;
  }

  /* bottom bar */
  .status {
    height: 19px;
    background: #242424;
    display: flex;
    align-items: center;
    justify-content: space-between;
    flex-shrink: 0;
    color: #484848;
    font-size: 6.500px;
    padding-left: 3px;
    padding-right: 8px;
  }
  .views { display: flex; align-items: center; gap: 7px; }
  .view {
    width: 12px;
    height: 9px;
    border: 1px solid #8a8a8a;
    font-size: 5.500px;
    line-height: 9px;
    text-align: center;
    color: #777;
  }
  .view.split { background: linear-gradient(90deg, transparent 5.500px, #8a8a8a 5.500px 6.500px, transparent 6.500px); }
  .sep { width: 3px; }

  /* overlays */
  .badge {
    position: absolute;
    left: 1184px;
    top: 628px;
    width: 66px;
    height: 66px;
    border-radius: 50%;
    background: #fff;
    display: flex;
    align-items: center;
    justify-content: center;
  }
  .badge svg { width: 32px; height: 23px; }
  .url {
    position: absolute;
    left: 556px;
    top: 10px;
    color: rgba(120, 120, 120, .75);
    font: 700 28px "Liberation Sans", sans-serif;
    letter-spacing: .6px;
  }
  .marks { position: absolute; inset: 0; pointer-events: none; }
  .mark {
    position: absolute;
    transform: translate(-50%, -50%) rotate(-28deg);
    white-space: nowrap;
    color: #808080;
    font-weight: 700;
    opacity: .28;
  }
  .latin { font-family: "Liberation Serif", serif; font-size: 58px; }
  .cjk { font-family: "Noto Sans CJK SC", sans-serif; font-size: 50px; -webkit-text-stroke: 2px #808080; }
</style>
